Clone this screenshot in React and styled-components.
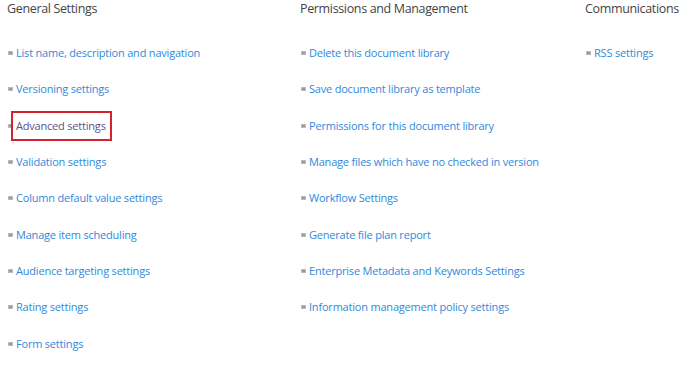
import React from 'react'
import styled, { createGlobalStyle } from 'styled-components'

const Global = createGlobalStyle`
  html, body { margin: 0; padding: 0; background: #fff; }
  body { font-family: "Open Sans", "Noto Sans", sans-serif; }
`;

const Page = styled.div`
  width: 697px;
  height: 368px;
  overflow: hidden;
  display: grid;
  grid-template-columns: 293px 285px 1fr;
  padding-left: 7px;
  box-sizing: border-box;
`;

const Column = styled.div`
  display: flex;
  flex-direction: column;
`;

const Heading = styled.h2`
  margin: 0 0 17px;
  font-size: 12.5px;
  line-height: 18px;
  font-weight: 400;
  color: #444;
  letter-spacing: -0.35px;
`;

const List = styled.ul`
  list-style: none;
  margin: 0;
  padding: 0;
`;

const Item = styled.li`
  height: 36.3px;
  display: flex;
  align-items: center;
  gap: 3px;
  padding-left: 1px;
`;

const Bullet = styled.span`
  width: 5px;
  height: 4px;
  background: #9a9a9a;
  border: 0.5px solid #bbb;
  box-sizing: border-box;
  flex-shrink: 0;
`;

const Link = styled.a`
  position: relative;
  font-size: 11px;
  color: ${p => (p.$visited ? '#5c4f8c' : '#3089dc')};
  text-decoration: none;
  letter-spacing: -0.2px;
  padding: ${p => (p.$marked ? '6px 4px 6px 3px' : '0')};
  margin-left: ${p => (p.$marked ? '-5px' : '0')};
  border: ${p => (p.$marked ? '2px solid #d5222c' : 'none')};
  line-height: 14px;
`;

const columns = [
  {
    title: 'General Settings',
    items: [
      'List name, description and navigation',
      'Versioning settings',
      'Advanced settings',
      'Validation settings',
      'Column default value settings',
      'Manage item scheduling',
      'Audience targeting settings',
      'Rating settings',
      'Form settings',
    ],
  },
  {
    title: 'Permissions and Management',
    items: [
      'Delete this document library',
      'Save document library as template',
      'Permissions for this document library',
      'Manage files which have no checked in version',
      'Workflow Settings',
      'Generate file plan report',
      'Enterprise Metadata and Keywords Settings',
      'Information management policy settings',
    ],
  },
  {
    title: 'Communications',
    items: ['RSS settings'],
  },
];

const App = () => {
  return (
    <>
      <Global />
      <Page>
        {columns.map(col => (
          <Column key={col.title}>
            <Heading>{col.title}</Heading>
            <List>
              {col.items.map(item => {
                const marked = item === 'Advanced settings';
                return (
                  <Item key={item}>
                    <Bullet />
                    <Link href="#" $visited={marked} $marked={marked}>{item}</Link>
                  </Item>
                );
              })}
            </List>
          </Column>
        ))}
      </Page>
    </>
  )
}

export default App
